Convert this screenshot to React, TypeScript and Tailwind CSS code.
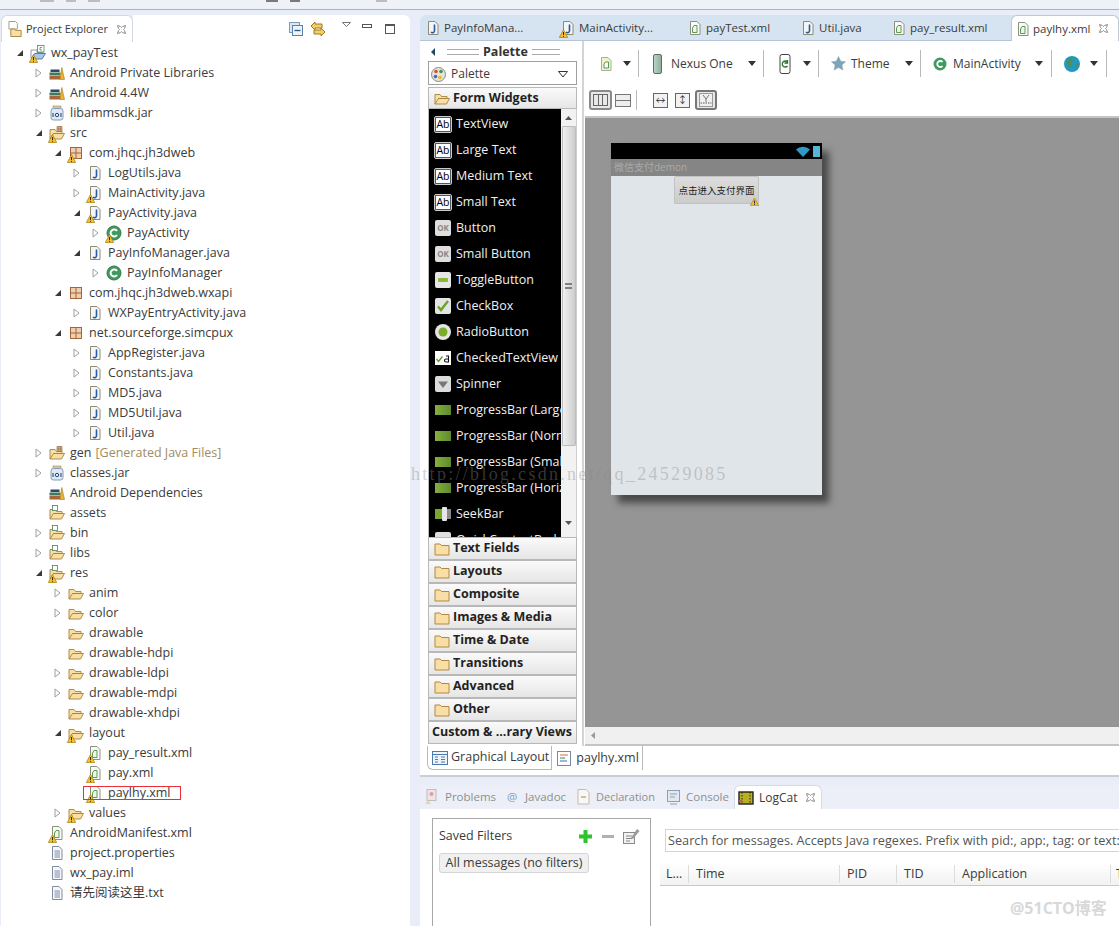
import type { ReactNode } from "react";

const UI_FONT = "font-['Open_Sans','Noto_Sans_CJK_SC',sans-serif]";

type IconName = "lib" | "jar" | "proj" | "pkg" | "java" | "cls" | "folder" | "xml" | "txt" | "gen" | "res";

interface TreeRow {
  depth: number;
  arrow?: "open" | "closed";
  icon: IconName;
  warn?: boolean;
  label: string;
  suffix?: string;
  marked?: boolean;
}

const TREE: TreeRow[] = [
  { depth: 0, arrow: "open", icon: "proj", warn: true, label: "wx_payTest" },
  { depth: 1, arrow: "closed", icon: "lib", label: "Android Private Libraries" },
  { depth: 1, arrow: "closed", icon: "lib", label: "Android 4.4W" },
  { depth: 1, arrow: "closed", icon: "jar", label: "libammsdk.jar" },
  { depth: 1, arrow: "open", icon: "gen", warn: true, label: "src" },
  { depth: 2, arrow: "open", icon: "pkg", warn: true, label: "com.jhqc.jh3dweb" },
  { depth: 3, arrow: "closed", icon: "java", label: "LogUtils.java" },
  { depth: 3, arrow: "closed", icon: "java", warn: true, label: "MainActivity.java" },
  { depth: 3, arrow: "open", icon: "java", warn: true, label: "PayActivity.java" },
  { depth: 4, arrow: "closed", icon: "cls", warn: true, label: "PayActivity" },
  { depth: 3, arrow: "open", icon: "java", label: "PayInfoManager.java" },
  { depth: 4, arrow: "closed", icon: "cls", label: "PayInfoManager" },
  { depth: 2, arrow: "open", icon: "pkg", label: "com.jhqc.jh3dweb.wxapi" },
  { depth: 3, arrow: "closed", icon: "java", label: "WXPayEntryActivity.java" },
  { depth: 2, arrow: "open", icon: "pkg", label: "net.sourceforge.simcpux" },
  { depth: 3, arrow: "closed", icon: "java", label: "AppRegister.java" },
  { depth: 3, arrow: "closed", icon: "java", label: "Constants.java" },
  { depth: 3, arrow: "closed", icon: "java", label: "MD5.java" },
  { depth: 3, arrow: "closed", icon: "java", label: "MD5Util.java" },
  { depth: 3, arrow: "closed", icon: "java", label: "Util.java" },
  { depth: 1, arrow: "closed", icon: "gen", label: "gen", suffix: "[Generated Java Files]" },
  { depth: 1, arrow: "closed", icon: "jar", label: "classes.jar" },
  { depth: 1, icon: "lib", label: "Android Dependencies" },
  { depth: 1, icon: "res", label: "assets" },
  { depth: 1, arrow: "closed", icon: "res", label: "bin" },
  { depth: 1, arrow: "closed", icon: "res", label: "libs" },
  { depth: 1, arrow: "open", icon: "res", warn: true, label: "res" },
  { depth: 2, arrow: "closed", icon: "folder", label: "anim" },
  { depth: 2, arrow: "closed", icon: "folder", label: "color" },
  { depth: 2, icon: "folder", label: "drawable" },
  { depth: 2, icon: "folder", label: "drawable-hdpi" },
  { depth: 2, arrow: "closed", icon: "folder", label: "drawable-ldpi" },
  { depth: 2, arrow: "closed", icon: "folder", label: "drawable-mdpi" },
  { depth: 2, icon: "folder", label: "drawable-xhdpi" },
  { depth: 2, arrow: "open", icon: "folder", warn: true, label: "layout" },
  { depth: 3, icon: "xml", warn: true, label: "pay_result.xml" },
  { depth: 3, icon: "xml", warn: true, label: "pay.xml" },
  { depth: 3, icon: "xml", warn: true, label: "paylhy.xml", marked: true },
  { depth: 2, arrow: "closed", icon: "folder", warn: true, label: "values" },
  { depth: 1, icon: "xml", warn: true, label: "AndroidManifest.xml" },
  { depth: 1, icon: "txt", label: "project.properties" },
  { depth: 1, icon: "txt", label: "wx_pay.iml" },
  { depth: 1, icon: "txt", label: "请先阅读这里.txt" },
];

const PALETTE_ITEMS: { icon: string; label: string }[] = [
  { icon: "ab", label: "TextView" },
  { icon: "ab", label: "Large Text" },
  { icon: "ab", label: "Medium Text" },
  { icon: "ab", label: "Small Text" },
  { icon: "ok", label: "Button" },
  { icon: "ok", label: "Small Button" },
  { icon: "toggle", label: "ToggleButton" },
  { icon: "check", label: "CheckBox" },
  { icon: "radio", label: "RadioButton" },
  { icon: "checked", label: "CheckedTextView" },
  { icon: "spinner", label: "Spinner" },
  { icon: "bar", label: "ProgressBar (Large)" },
  { icon: "bar", label: "ProgressBar (Normal)" },
  { icon: "bar", label: "ProgressBar (Small)" },
  { icon: "bar", label: "ProgressBar (Horizontal)" },
  { icon: "seek", label: "SeekBar" },
  { icon: "ok", label: "QuickContactBadge" },
];

const SECTIONS = ["Text Fields", "Layouts", "Composite", "Images & Media", "Time & Date", "Transitions", "Advanced", "Other"];

const EDITOR_TABS = [
  { label: "PayInfoMana...", icon: "java", width: 135, warn: false },
  { label: "MainActivity...", icon: "java", width: 127, warn: true },
  { label: "payTest.xml", icon: "xml", width: 113, warn: false },
  { label: "Util.java", icon: "java", width: 91, warn: false },
  { label: "pay_result.xml", icon: "xml", width: 125, warn: false },
];

function WarnBadge() {
  return (
    <svg width="9" height="9" viewBox="0 0 9 9" className="absolute left-[-1px] bottom-[-2px]">
      <path d="M4.5.5 8.7 8.500H.3z" fill="#f2c230" stroke="#a87a10" strokeWidth=".7" />
      <path d="M4.5 3v3M4.5 6.800v1" stroke="#3a2a00" strokeWidth="1" />
    </svg>
  );
}

function FileShape({ children, fill = "#fff", stroke = "#8a8f78" }: { children?: ReactNode; fill?: string; stroke?: string }) {
  return (
    <svg width="16" height="16" viewBox="0 0 16 16">
      <path d="M3.500 1.500h6.500l3 3v10h-9.500z" fill={fill} stroke={stroke} />
      {children}
    </svg>
  );
}

function TreeIcon({ name }: { name: string }) {
  if (name === "java") {
    return (
      <FileShape fill="#f2f5fa" stroke="#8d8a70">
        <path d="M9.500 4.500v6.500a2 2 0 0 1-3.500 1" fill="none" stroke="#2a5a9a" strokeWidth="1.600" />
      </FileShape>
    );
  }
  if (name === "xml") {
    return (
      <FileShape fill="#f8f9fa" stroke="#8d8f80">
        <path d="M10 5.500H7L5.500 8v4.500H10z" fill="#eef6e6" stroke="#5d9a55" />
      </FileShape>
    );
  }
  if (name === "txt") {
    return (
      <FileShape fill="#f5f7fb" stroke="#7f8ba0">
        <path d="M5.500 6h5.500M5.500 8h5.500M5.500 10h5.500M5.500 12h5.500" stroke="#7f8ba0" />
      </FileShape>
    );
  }
  if (name === "lib") {
    return (
      <svg width="16" height="16" viewBox="0 0 16 16">
        <rect x="0.500" y="11" width="11" height="3.500" fill="#a8663a" />
        <rect x="0.500" y="7.500" width="11" height="3" fill="#3f7a5a" />
        <rect x="1.500" y="4.500" width="9" height="2.500" fill="#33456a" />
        <path d="M11 14.500 12.800 2.500l2.700 12z" fill="#eab334" stroke="#a87a10" strokeWidth=".6" />
      </svg>
    );
  }
  if (name === "jar") {
    return (
      <svg width="16" height="16" viewBox="0 0 16 16">
        <rect x="4" y="1" width="8" height="2.500" fill="#d9c89a" stroke="#9a8a60" strokeWidth=".6" />
        <rect x="2" y="3.500" width="12" height="11.500" rx="2.500" fill="#dfe8f5" stroke="#8a9ab5" />
        <path d="M4 8v4M12 8v4" stroke="#2a4a7a" strokeWidth="1.100" />
        <circle cx="8" cy="10" r="1.700" fill="none" stroke="#2a4a7a" />
      </svg>
    );
  }
  if (name === "pkg") {
    return (
      <svg width="16" height="16" viewBox="0 0 16 16">
        <rect x="2.500" y="2.500" width="11" height="11" fill="#ecd0b0" stroke="#a5643a" />
        <path d="M8 2.500v11M2.500 8h11" stroke="#a5643a" />
      </svg>
    );
  }
  if (name === "cls") {
    return (
      <svg width="16" height="16" viewBox="0 0 16 16">
        <circle cx="8" cy="8" r="7" fill="#3f9a5f" stroke="#2f7a48" />
        <path d="M11 6a3.500 3.500 0 1 0 0 4" fill="none" stroke="#fff" strokeWidth="2" />
      </svg>
    );
  }
  if (name === "proj") {
    return (
      <svg width="16" height="16" viewBox="0 0 16 16">
        <path d="M1 13V5h6v2.500h6v1.500" fill="#fff" stroke="#7f8fa5" strokeWidth=".9" />
        <path d="M1 14l3.500-5.500h11L12 14z" fill="#a9c8ec" stroke="#4f72a0" strokeWidth=".9" />
        <rect x="7.500" y="0.500" width="6.500" height="6.500" fill="#fff" stroke="#4f8a52" strokeWidth=".8" />
        <path d="M12 2.500H10v2.500h2" fill="none" stroke="#4f8a52" strokeWidth=".8" />
      </svg>
    );
  }
  const folder = (
    <path d="M1 14V4.500h5l1.500 2H13v2H4.500L1 14h11.500L15.500 8.500H4.500" fill="#f7dfa6" stroke="#a9823c" strokeWidth=".9" />
  );
  if (name === "gen") {
    return (
      <svg width="16" height="16" viewBox="0 0 16 16">
        {folder}
        <path d="M8 1.500h5v5H8zM9.700 1.500v5M11.400 1.500v5M8 3.200h5M8 4.900h5" fill="#f5e2c6" stroke="#9a6a3a" strokeWidth=".7" />
      </svg>
    );
  }
  if (name === "res") {
    return (
      <svg width="16" height="16" viewBox="0 0 16 16">
        {folder}
        <rect x="3.500" y="0.500" width="5" height="5" fill="#fff" stroke="#4f7f52" strokeWidth=".8" />
      </svg>
    );
  }
  return (
    <svg width="16" height="16" viewBox="0 0 16 16">
      {folder}
    </svg>
  );
}

function Arrow({ kind }: { kind?: "open" | "closed" }) {
  if (kind === "open") {
    return (
      <svg width="8" height="8" viewBox="0 0 8 8">
        <path d="M7 1v6H1z" fill="#3a3a3a" />
      </svg>
    );
  }
  if (kind === "closed") {
    return (
      <svg width="7" height="10" viewBox="0 0 7 10">
        <path d="M1 1l5 4-5 4z" fill="#fff" stroke="#9aa0a6" />
      </svg>
    );
  }
  return null;
}

function CloseX({ muted }: { muted?: boolean }) {
  return (
    <svg width="11" height="11" viewBox="0 0 11 11" className="shrink-0">
      <path d="M1.500 1.500l3 1 1 1 1-1 3-1-1 3-1 1 1 1 1 3-3-1-1-1-1 1-3 1 1-3 1-1-1-1z" fill="#fff" stroke={muted ? "#b0b0b0" : "#8a8a8a"} />
    </svg>
  );
}

function ProjectTree() {
  return (
    <div className="pt-px">
      {TREE.map((row) => (
        <div key={row.label + row.depth} className="flex h-5 items-center">
          <div className="shrink-0" style={{ width: 15 + row.depth * 19 }} />
          <div className="flex w-[14px] shrink-0 items-center">
            <Arrow kind={row.arrow} />
          </div>
          <div className="relative flex h-4 w-4 shrink-0 items-center justify-center">
            <TreeIcon name={row.icon} />
            {row.warn && <WarnBadge />}
          </div>
          <span className="relative ml-[5px] whitespace-nowrap text-[12.500px] text-[#3b3b3b]">
            {row.label}
            {row.suffix && <span className="ml-1 text-[#a08c64]">{row.suffix}</span>}
            {row.marked && (
              <span className="absolute left-[-25px] right-[-10px] top-[2px] bottom-[2px] border border-[#e8303a]" />
            )}
          </span>
        </div>
      ))}
    </div>
  );
}

function ProjectExplorer() {
  return (
    <div className="ml-px flex h-full w-[409px] shrink-0 flex-col rounded-t-md bg-white">
      <div className="flex h-[27px] items-center bg-[#e9edf7]">
        <div className="flex h-[27px] w-[132px] items-center rounded-t-md border-x border-t border-[#d3d8e4] bg-white pl-[6px]">
          <svg width="15" height="18" viewBox="0 0 16 18" className="shrink-0">
            <path d="M1 1h7l2 2v6H1z" fill="#fff" stroke="#9a9a8a" />
            <path d="M3 9h4l1 1.500h6V17H3z" fill="#f7dfa6" stroke="#a9823c" />
          </svg>
          <span className="ml-[3px] whitespace-nowrap text-[11px] text-[#3b3b3b]">Project Explorer</span>
          <span className="ml-[8px]">
            <CloseX />
          </span>
        </div>
        <div className="flex h-[27px] flex-1 items-center rounded-tr-md bg-white pl-[156px]">
          <svg width="14" height="14" viewBox="0 0 14 14">
            <rect x="0.500" y="0.500" width="10" height="10" fill="#dbe6f4" stroke="#7f9ab8" />
            <rect x="3.500" y="3.500" width="10" height="10" fill="#edf3fa" stroke="#5a80a8" />
            <path d="M5.500 8.500h6" stroke="#2a5a8a" strokeWidth="1.300" />
          </svg>
          <svg width="16" height="16" viewBox="0 0 16 16" className="ml-[7px]">
            <path d="M1 5l4-4v2h7v4H5v2zM15 11l-4-4v2H4v4h7v2z" fill="#f2cf6a" stroke="#a27a1a" />
          </svg>
          <svg width="9" height="5" viewBox="0 0 9 5" className="ml-4 mb-[9px]">
            <path d="M.5.500h8L4.500 4.500z" fill="#fff" stroke="#555" strokeWidth=".8" />
          </svg>
          <div className="ml-[11px] mb-[5px] h-[4px] w-[10px] border border-[#555]" />
          <div className="ml-[13px] h-[10px] w-[10px] border border-t-2 border-[#555]" />
        </div>
      </div>
      <ProjectTree />
    </div>
  );
}

function EditorTab({ label, icon, width, warn }: { label: string; icon: string; width: number; warn: boolean }) {
  return (
    <div className="flex h-full shrink-0 items-center pl-[5px]" style={{ width }}>
      <div className="relative flex h-4 w-4 shrink-0 items-center justify-center">
        <TreeIcon name={icon} />
        {warn && <WarnBadge />}
      </div>
      <span className="ml-[3px] whitespace-nowrap text-[11.500px] text-[#3b3b3b]">{label}</span>
    </div>
  );
}

function PaletteGlyph({ kind }: { kind: string }) {
  if (kind === "ab") {
    return (
      <div className="flex h-[15px] w-4 items-center justify-center rounded-[1px] border border-[#555] bg-white text-[10.500px] leading-none text-black outline outline-1 outline-[#cccccc]">
        Ab
      </div>
    );
  }
  if (kind === "ok") {
    return (
      <div className="flex h-4 w-4 items-center justify-center rounded-[2px] bg-[#dedede] text-[8px] font-bold leading-none text-[#888]">
        OK
      </div>
    );
  }
  if (kind === "toggle") {
    return (
      <div className="flex h-4 w-4 items-center justify-center rounded-[2px] bg-[#e6e6e6]">
        <div className="h-[4px] w-[10px] rounded-[1px] bg-[#8cb83a]" />
      </div>
    );
  }
  if (kind === "check") {
    return (
      <svg width="16" height="16" viewBox="0 0 16 16">
        <rect width="16" height="16" rx="2" fill="#e4e4e4" />
        <path d="M3 8.500l3 3.500 7-9" fill="none" stroke="#6aa52a" strokeWidth="2.400" />
      </svg>
    );
  }
  if (kind === "radio") {
    return (
      <svg width="16" height="16" viewBox="0 0 16 16">
        <circle cx="8" cy="8" r="8" fill="#e4e4e4" />
        <circle cx="8" cy="8" r="4.500" fill="#7aae26" />
      </svg>
    );
  }
  if (kind === "checked") {
    return (
      <svg width="16" height="14" viewBox="0 0 16 14">
        <rect width="16" height="14" fill="#fff" />
        <path d="M1.500 8l2 2.500 4-5" fill="none" stroke="#5a9a2a" strokeWidth="1.300" />
        <path d="M11 5h2.500v6H11a1.500 1.500 0 0 1 0-3h2.500" fill="none" stroke="#111" strokeWidth="1.100" />
      </svg>
    );
  }
  if (kind === "spinner") {
    return (
      <svg width="16" height="16" viewBox="0 0 16 16">
        <rect width="16" height="16" rx="2" fill="#dcdcdc" />
        <path d="M3 5.500h10L8 12z" fill="#777" />
      </svg>
    );
  }
  if (kind === "seek") {
    return (
      <div className="flex h-[10px] w-4 items-center bg-[#7aa82e]">
        <div className="ml-[7px] h-[14px] w-[5px] rounded-[1px] bg-[#e6e6e6]" />
        <div className="h-[10px] flex-1 bg-[#8a8a8a]" />
      </div>
    );
  }
  return <div className="h-[10px] w-4 bg-gradient-to-r from-[#86b03c] to-[#5e8a30]" />;
}

function Palette() {
  return (
    <div className="flex h-full w-[164px] shrink-0 flex-col border-r-2 border-[#d4d4d4] pl-[8px] pr-[5px]">
      <div className="flex h-[20px] shrink-0 items-center pl-[3px] pt-[2px]">
        <svg width="5" height="8" viewBox="0 0 5 8">
          <path d="M4 0v8L0 4z" fill="#1d4a6a" />
        </svg>
        <div className="ml-[11px] h-[6px] w-[32px] border-y border-[#aaa]" />
        <span className="mx-[4px] text-[12.500px] font-bold text-[#333]">Palette</span>
        <div className="h-[6px] w-[28px] border-y border-[#aaa]" />
      </div>
      <div className="flex h-[24px] shrink-0 items-center border border-[#a0a0a0] pl-[2px] pr-[8px] pt-[2px]">
        <svg width="15" height="15" viewBox="0 0 15 15">
          <circle cx="7.500" cy="7.500" r="7" fill="#e8e4da" stroke="#888" />
          <circle cx="5" cy="4.500" r="1.800" fill="#d9502e" />
          <circle cx="10" cy="4.500" r="1.800" fill="#3a9a4a" />
          <circle cx="4.500" cy="9.500" r="1.800" fill="#3a6ac2" />
          <circle cx="9" cy="10.500" r="1.800" fill="#e8b82e" />
        </svg>
        <span className="ml-[5px] flex-1 text-[12px] text-[#3b3b3b]">Palette</span>
        <svg width="10" height="7" viewBox="0 0 10 7">
          <path d="M.5.500h9L5 6z" fill="#fff" stroke="#333" />
        </svg>
      </div>
      <div className="mt-[2px] flex h-[22px] shrink-0 items-center border border-[#b8b8b8] bg-gradient-to-b from-[#fafafa] to-[#e6e6e6] pl-[5px]">
        <TreeIcon name="folder" />
        <span className="ml-[3px] text-[12.500px] font-bold text-[#222]">Form Widgets</span>
      </div>
      <div className="flex h-[428px] shrink-0 border-l border-[#b8b8b8]">
        <div className="w-[132px] shrink-0 overflow-hidden bg-black pl-[6px] pt-[2px] text-[12.500px] text-[#f0f0f0]">
          {PALETTE_ITEMS.map((item) => (
            <div key={item.label} className="flex h-[26px] items-center whitespace-nowrap">
              <div className="flex w-4 shrink-0 items-center justify-center">
                <PaletteGlyph kind={item.icon} />
              </div>
              <span className="ml-[5px]">{item.label}</span>
            </div>
          ))}
        </div>
        <div className="flex flex-1 flex-col items-center border-r border-[#cfcfcf] bg-[#f2f2f2]">
          <svg width="7" height="4" viewBox="0 0 7 4" className="mt-[7px]">
            <path d="M3.500 0 7 4H0z" fill="#555" />
          </svg>
          <div className="mt-[6px] flex h-[320px] w-[14px] items-center justify-center rounded-[1px] border border-[#bcbcbc] bg-gradient-to-r from-[#f0f0f0] to-[#cdcdcd]">
            <div className="h-[6px] w-[7px] border-y-2 border-[#808080]" />
          </div>
          <svg width="7" height="4" viewBox="0 0 7 4" className="mt-[75px]">
            <path d="M0 0h7L3.500 4z" fill="#555" />
          </svg>
        </div>
      </div>
      {SECTIONS.map((name) => (
        <div key={name} className="flex h-[23px] shrink-0 items-center border border-[#b8b8b8] bg-gradient-to-b from-[#fafafa] to-[#e6e6e6] pl-[5px]">
          <svg width="16" height="14" viewBox="0 0 16 14">
            <path d="M1 13V2h5l1.500 1.500H15V13z" fill="#f9dfa6" stroke="#b08a3e" />
          </svg>
          <span className="ml-[3px] whitespace-nowrap text-[12.500px] font-bold text-[#222]">{name}</span>
        </div>
      ))}
      <div className="flex h-[23px] shrink-0 items-center border border-[#b8b8b8] bg-gradient-to-b from-[#fafafa] to-[#e6e6e6] pl-[3px]">
        <span className="whitespace-nowrap text-[12.500px] font-bold text-[#222]">Custom &amp; ...rary Views</span>
      </div>
    </div>
  );
}

function Chevron({ className }: { className: string }) {
  return (
    <svg width="8" height="5" viewBox="0 0 8 5" className={`shrink-0 ${className}`}>
      <path d="M0 0h8L4 5z" fill="#333" />
    </svg>
  );
}

function Divider({ className }: { className: string }) {
  return <div className={`h-[27px] w-px shrink-0 bg-[#b8b8b8] ${className}`} />;
}

function LayoutToolbar() {
  return (
    <div className="h-[75px] shrink-0 text-[12px] text-[#3b3b3b]">
      <div className="flex h-[43px] items-center pl-[13px] pt-[2px]">
        <FileShape fill="#f1f0cf" stroke="#a8b098">
          <path d="M10.500 6H7.500L6 8v4h4.500z" fill="#fff" stroke="#4f9a55" />
        </FileShape>
        <Chevron className="ml-[9px]" />
        <Divider className="ml-[7px]" />
        <div className="ml-[14px] h-5 w-[9px] shrink-0 rounded-[2px] border border-[#5e6e62] bg-gradient-to-r from-[#b8d4c4] to-[#8fb09e]" />
        <span className="ml-[9px] w-[63px] whitespace-nowrap">Nexus One</span>
        <Chevron className="ml-[14px]" />
        <Divider className="ml-[7px]" />
        <svg width="12" height="20" viewBox="0 0 12 20" className="ml-[15px] shrink-0">
          <rect x="1" y="0.500" width="10" height="19" rx="2" fill="#fff" stroke="#444" />
          <path d="M8.500 8a3 3 0 1 0 0 4M8.500 6v3H5.500" fill="none" stroke="#1f7a2a" strokeWidth="1.300" />
        </svg>
        <Chevron className="ml-[12px]" />
        <Divider className="ml-[7px]" />
        <svg width="15" height="15" viewBox="0 0 16 16" className="ml-[12px] shrink-0">
          <path d="M8 .500l2.300 5 5.200.600-3.900 3.500 1.100 5.400L8 12.300 3.300 15l1.100-5.400L.500 6.100l5.200-.600z" fill="#7aa6bd" stroke="#8a9aa5" strokeWidth=".5" />
        </svg>
        <span className="ml-[5px] w-[38px] whitespace-nowrap">Theme</span>
        <Chevron className="ml-[16px]" />
        <Divider className="ml-[7px]" />
        <svg width="14" height="14" viewBox="0 0 14 14" className="ml-[12px] shrink-0">
          <circle cx="7" cy="7" r="6.500" fill="#3f9a5f" />
          <path d="M9.500 5a3 3 0 1 0 0 4" fill="none" stroke="#fff" strokeWidth="1.800" />
        </svg>
        <span className="ml-[6px] w-[68px] whitespace-nowrap">MainActivity</span>
        <Chevron className="ml-[14px]" />
        <Divider className="ml-[8px]" />
        <svg width="16" height="16" viewBox="0 0 16 16" className="ml-[12px] shrink-0">
          <circle cx="8" cy="8" r="8" fill="#1f9ac4" />
          <path d="M3 4l5-2.500 2 3.500-3.500 2.500 1 3-2.500 1-2.500-4.500zM11 8l3.500-1v3l-3 3z" fill="#4f8f5a" />
        </svg>
        <Chevron className="ml-[10px]" />
        <Divider className="ml-[8px]" />
      </div>
      <div className="flex h-[32px] items-center pl-[4px]">
        <div className="flex h-5 w-[23px] items-center justify-center rounded-[3px] border-2 border-[#8a8a8a] bg-[#e8e8e8]">
          <div className="h-[12px] w-[15px] border border-[#666] bg-[linear-gradient(90deg,transparent_32%,#666_32%,#666_38%,transparent_38%,transparent_65%,#666_65%,#666_71%,transparent_71%)]" />
        </div>
        <div className="ml-[3px] h-[13px] w-[16px] border border-[#777] bg-[linear-gradient(180deg,#eee_45%,#777_45%,#777_55%,#eee_55%)]" />
        <div className="ml-[5px] h-5 w-px bg-[#b8b8b8]" />
        <div className="ml-[16px] flex h-[15px] w-[15px] items-center justify-center border border-[#666] bg-[#f2f2f2] text-[10px] leading-none text-[#333]">↔</div>
        <div className="ml-[7px] flex h-[15px] w-[15px] items-center justify-center border border-[#666] bg-[#f2f2f2] text-[10px] leading-none text-[#333]">↕</div>
        <div className="ml-[5px] flex h-5 w-[22px] items-center justify-center rounded-[3px] border-2 border-[#777] bg-[#e8e8e8]">
          <svg width="14" height="14" viewBox="0 0 14 14">
            <rect x="0.500" y="0.500" width="13" height="13" fill="#f0f0f0" stroke="#999" />
            <path d="M4 2l3 4 3-4M7 6v3" fill="none" stroke="#777" />
            <path d="M1.500 10h11" stroke="#555" strokeDasharray="1.500 1" />
          </svg>
        </div>
      </div>
    </div>
  );
}

function PhonePreview() {
  return (
    <div className="flex-1 overflow-hidden border-t-2 border-[#c4c4c4] bg-[#959595] pl-[26px] pt-[25px]">
      <div className="h-[352px] w-[211px] bg-[#e0e5e9] shadow-[7px_8px_7px_#4a4a4a]">
        <div className="flex h-4 items-center justify-end gap-[3px] bg-black pr-[2px]">
          <svg width="14" height="11" viewBox="0 0 14 11">
            <path d="M0 3.500a10 10 0 0 1 14 0L7 11z" fill="#2f9ac8" />
          </svg>
          <div className="h-[11px] w-[7px] bg-[#55b5d8]" />
        </div>
        <div className="flex h-[17px] items-center bg-[#858585] pl-[3px] text-[10px] text-[#aaaaaa]">微信支付demon</div>
        <div className="relative ml-[63px] flex h-[28px] w-[85px] items-center justify-center rounded-t-[2px] border border-[#c2c2c2] bg-gradient-to-b from-[#dddddd] to-[#cccccc] text-[9.500px] text-[#222] font-['Noto_Sans_CJK_SC',sans-serif]">
          点击进入支付界面
          <svg width="9" height="8" viewBox="0 0 9 8" className="absolute right-[-1px] bottom-[-3px]">
            <path d="M4.500 0 9 8H0z" fill="#f2c230" stroke="#a87a10" strokeWidth=".6" />
            <path d="M4.500 2.500v3M4.500 6v1" stroke="#333" />
          </svg>
        </div>
      </div>
    </div>
  );
}

function EditorPanel() {
  return (
    <div className="flex h-[762px] shrink-0 flex-col rounded-t-md border-b-2 border-[#c8cdd8] bg-white">
      <div className="flex h-[26px] shrink-0 rounded-t-md border-b border-[#b8c4d4] bg-[#d6e3f0]">
        {EDITOR_TABS.map((tab) => (
          <EditorTab key={tab.label} {...tab} />
        ))}
        <div className="flex h-[26px] flex-1 items-center rounded-t-md border-x border-t border-[#c0c8d4] bg-white pl-[3px] text-[11.500px] text-[#3b3b3b]">
          <TreeIcon name="xml" />
          <span className="ml-[2px] whitespace-nowrap">paylhy.xml</span>
          <span className="ml-[7px]">
            <CloseX />
          </span>
        </div>
      </div>
      <div className="flex h-[705px] shrink-0">
        <Palette />
        <div className="flex min-w-0 flex-1 flex-col pl-px">
          <LayoutToolbar />
          <PhonePreview />
          <div className="flex h-[19px] shrink-0 items-center border-b-2 border-[#c4c4c4] bg-[#f0f0f0] pl-[6px]">
            <svg width="4" height="7" viewBox="0 0 4 7">
              <path d="M4 0v7L0 3.500z" fill="#999" />
            </svg>
          </div>
        </div>
      </div>
      <div className="flex h-[29px] items-start pl-[7px] text-[12.500px] text-[#3b3b3b]">
        <div className="flex h-[24px] items-center rounded-bl-md border-b border-l border-r border-[#b8b8b8] pl-[4px] pr-[2px]">
          <svg width="16" height="14" viewBox="0 0 16 14">
            <rect x="0.500" y="0.500" width="15" height="13" fill="#eef3fa" stroke="#4a7ab0" />
            <path d="M.5 3.500h15M3 6h3M3 8.500h3M3 11h3M9 6h4M9 8.500h4M9 11h4" stroke="#4a7ab0" />
          </svg>
          <span className="ml-[3px] whitespace-nowrap">Graphical Layout</span>
        </div>
        <div className="flex h-[24px] items-center border-r border-[#b8b8b8] pl-[5px] pr-[3px]">
          <svg width="14" height="15" viewBox="0 0 14 15">
            <rect x="0.500" y="0.500" width="13" height="14" fill="#fff" stroke="#7a8a9a" />
            <path d="M3 4h8" stroke="#d8702a" />
            <path d="M3 7h5" stroke="#3a8a4a" />
            <path d="M3 10h7" stroke="#3a6ab0" />
          </svg>
          <span className="ml-[5px] whitespace-nowrap">paylhy.xml</span>
        </div>
      </div>
    </div>
  );
}

function LogCatPanel() {
  const muted = "whitespace-nowrap text-[#8f8f8f]";
  return (
    <div className="mt-[8px] flex min-h-0 flex-1 flex-col rounded-t-md bg-white text-[12.500px]">
      <div className="flex h-[24px] shrink-0 items-center bg-[#eceff7] pl-[5px] text-[11.500px]">
        <svg width="14" height="16" viewBox="0 0 14 16" className="shrink-0 opacity-60">
          <rect x="2" y="0.500" width="9" height="11" fill="#f2dcdc" stroke="#a0a0a0" />
          <circle cx="6.500" cy="5" r="2" fill="#d86a6a" />
          <path d="M0 15l3-4 3 4z" fill="#e8c860" />
        </svg>
        <span className={`ml-[6px] w-[50px] ${muted}`}>Problems</span>
        <span className="ml-[12px] w-[11px] text-[#7f9fbf]">@</span>
        <span className={`ml-[7px] w-[42px] ${muted}`}>Javadoc</span>
        <svg width="14" height="16" viewBox="0 0 14 16" className="ml-[10px] shrink-0 opacity-60">
          <path d="M1 .500h8l3 3V15H1z" fill="#fff" stroke="#b09a60" />
          <path d="M4 8h5" stroke="#c8a040" strokeWidth="2" />
        </svg>
        <span className={`ml-[5px] w-[60px] text-[11px] ${muted}`}>Declaration</span>
        <svg width="13" height="15" viewBox="0 0 13 15" className="ml-[11px] shrink-0 opacity-70">
          <rect x="0.500" y="0.500" width="12" height="11" fill="#dfe6ee" stroke="#6a7f96" />
          <path d="M3 4h7M3 7h5M3 14h7" stroke="#6a7f96" />
        </svg>
        <span className={`ml-[6px] w-[42px] ${muted}`}>Console</span>
        <div className="ml-[6px] flex h-[24px] w-[88px] items-center rounded-t-md border-x border-t border-[#d6dae4] bg-white pl-[3px] text-[12px] text-[#3b3b3b]">
          <svg width="16" height="14" viewBox="0 0 16 14" className="shrink-0">
            <rect x="1" y="1" width="14" height="12" fill="#b8b020" stroke="#222" strokeWidth="1.400" />
            <path d="M4 1v12M12 1v12" stroke="#222" strokeDasharray="1.500 1.500" />
            <path d="M1 10h3" stroke="#d83ac0" strokeWidth="2" />
          </svg>
          <span className="ml-[5px]">LogCat</span>
          <span className="ml-[7px]">
            <CloseX />
          </span>
        </div>
      </div>
      <div className="flex min-h-0 flex-1 pl-[12px] pt-[9px] text-[#3b3b3b]">
        <div className="w-[219px] shrink-0 border border-b-0 border-[#a8a8a8] pl-[6px] pr-[10px]">
          <div className="flex h-[34px] items-center">
            <span className="flex-1 whitespace-nowrap">Saved Filters</span>
            <svg width="13" height="13" viewBox="0 0 13 13" className="shrink-0">
              <path d="M4.500 0h4v4.500H13v4H8.500V13h-4V8.500H0v-4h4.500z" fill="#2fc42f" />
            </svg>
            <div className="ml-[10px] h-[3px] w-[12px] shrink-0 bg-[#b0b0b0]" />
            <svg width="17" height="16" viewBox="0 0 17 16" className="ml-[9px] shrink-0">
              <rect x="0.500" y="4.500" width="11" height="11" fill="#f2f2f2" stroke="#8a8a8a" />
              <path d="M3 8h6M3 10.500h6M3 13h4" stroke="#8a8a8a" />
              <path d="M8 10l6-9 2.500 2-6.500 8z" fill="#9a9a9a" />
            </svg>
          </div>
          <div className="flex h-5 w-[150px] items-center justify-center rounded-[3px] border border-[#d4d4d4] bg-[#f0f0f0] whitespace-nowrap">
            All messages (no filters)
          </div>
        </div>
        <div className="ml-[9px] min-w-0 flex-1 overflow-hidden">
          <div className="ml-[5px] mt-[11px] flex h-[23px] items-center whitespace-nowrap border border-r-0 border-[#d4d4d4] pl-[2px] pt-px text-[12.700px] text-[#555]">
            Search for messages. Accepts Java regexes. Prefix with pid:, app:, tag: or text:
          </div>
          <div className="mt-[11px] flex h-[23px] items-center border-b border-[#c8c8c8] bg-gradient-to-b from-white to-[#f2f2f2] whitespace-nowrap">
            <div className="w-[29px] shrink-0 border-r border-[#dcdcdc] pl-[6px]">L...</div>
            <div className="w-[151px] shrink-0 border-r border-[#dcdcdc] pl-[7px]">Time</div>
            <div className="w-[57px] shrink-0 border-r border-[#dcdcdc] pl-[7px]">PID</div>
            <div className="w-[58px] shrink-0 border-r border-[#dcdcdc] pl-[7px]">TID</div>
            <div className="w-[156px] shrink-0 border-r border-[#dcdcdc] pl-[7px]">Application</div>
            <div className="pl-[5px]">T</div>
          </div>
        </div>
      </div>
    </div>
  );
}

export default function App() {
  return (
    <div className={`relative h-[926px] w-[1119px] overflow-hidden bg-[#e9edf7] ${UI_FONT}`}>
      <div className="flex h-[10px] gap-[12px] border-b border-[#aab2c8] bg-[#eef1f8] pl-[40px]">
        <div className="h-[2px] w-[14px] bg-[#bdbdbd]" />
        <div className="h-[2px] w-[10px] bg-[#bdbdbd]" />
        <div className="h-[2px] w-[12px] bg-[#bdbdbd]" />
        <div className="ml-[154px] h-[2px] w-[12px] bg-[#7a7a7a]" />
        <div className="h-[2px] w-[10px] bg-[#7a7a7a]" />
        <div className="ml-[64px] h-[2px] w-[11px] bg-[#bdbdbd]" />
      </div>
      <div className="flex h-[916px] pt-[5px]">
        <ProjectExplorer />
        <div className="ml-[10px] flex min-w-0 flex-1 flex-col">
          <EditorPanel />
          <LogCatPanel />
        </div>
      </div>
      <div className="pointer-events-none absolute left-[411px] top-[461px] whitespace-nowrap font-['Liberation_Serif',serif] text-[18px] tracking-[2.300px] text-[#8a8a8a]/40">
        http://blog.csdn.net/qq_24529085
      </div>
      <div className="pointer-events-none absolute left-[1010px] top-[896px] whitespace-nowrap text-[16px] font-bold text-[#d8d8d8]">
        @51CTO博客
      </div>
    </div>
  );
}
